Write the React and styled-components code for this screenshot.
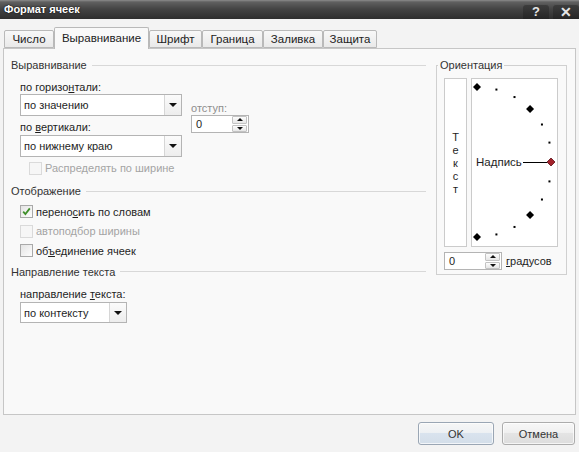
import React from 'react';
import styled, { createGlobalStyle } from 'styled-components';

const GlobalStyle = createGlobalStyle`
    html, body {
        margin: 0;
        padding: 0;
    }
    body {
        background: #f3f3f3;
        font-family: "Liberation Sans", Arial, sans-serif;
        font-size: 11px;
        color: #1e1e1e;
    }
`;

const Window = styled.div`
    width: 579px;
    height: 452px;
    display: flex;
    flex-direction: column;
    background: #f3f3f3;
    overflow: hidden;
`;

const TitleBar = styled.div`
    flex: none;
    height: 19px;
    display: flex;
    justify-content: space-between;
    align-items: stretch;
    background: linear-gradient(#8c8c8c 0, #606060 2px, #444 9px, #2e2e2e 19px);
`;

const Title = styled.div`
    color: #fff;
    font-weight: bold;
    font-size: 11px;
    line-height: 19px;
    padding-left: 4px;
    text-shadow: 0 0 2px #000;
`;

const TitleButtons = styled.div`
    display: flex;
    align-items: flex-end;
    gap: 4px;
`;

const TitleButton = styled.div`
    width: 26px;
    height: 15px;
    border-radius: 3px 3px 0 0;
    background: linear-gradient(#3e3e3e, #252525);
    box-shadow: inset 0 1px 0 rgba(255, 255, 255, 0.12);
    color: #e6e6e6;
    font-weight: bold;
    font-size: ${p => p.size || 13}px;
    display: flex;
    align-items: center;
    justify-content: center;
`;

const Body = styled.div`
    flex: 1;
    display: flex;
    flex-direction: column;
    padding: 8px 3px 0 3px;
`;

const TabRow = styled.div`
    display: flex;
    align-items: flex-end;
    height: 21px;
    padding-left: 1px;
    position: relative;
    z-index: 1;
`;

const Tab = styled.div`
    box-sizing: border-box;
    width: ${p => p.width}px;
    height: ${p => (p.active ? 22 : 18)}px;
    margin-bottom: ${p => (p.active ? -1 : 0)}px;
    border: 1px solid #b9b9b9;
    border-bottom: ${p => (p.active ? 'none' : '1px solid #b9b9b9')};
    border-radius: 2px 2px 0 0;
    background: ${p => (p.active ? '#f9f9f9' : 'linear-gradient(#f8f8f8, #e9e9e9)')};
    color: #222;
    font-size: 11.5px;
    text-align: center;
    line-height: ${p => (p.active ? 21 : 17)}px;
`;

const Panel = styled.div`
    flex: none;
    box-sizing: border-box;
    height: 367px;
    border: 1px solid #c6c6c6;
    background: #f9f9f9;
    display: flex;
    align-items: flex-start;
`;

const LeftColumn = styled.div`
    width: 422px;
    display: flex;
    flex-direction: column;
`;

const GroupTitle = styled.div`
    display: flex;
    align-items: center;
    height: 14px;
    line-height: 14px;
    margin-top: ${p => p.top}px;
    padding-left: 7px;
    color: #333;
    &::after {
        content: '';
        flex: 1;
        height: 1px;
        margin-left: 5px;
        background: #d8d8d8;
    }
`;

const AlignBlock = styled.div`
    display: flex;
    margin: 8px 0 0 16px;
`;

const FieldColumn = styled.div`
    display: flex;
    flex-direction: column;
    padding-top: ${p => p.top || 0}px;
    margin-left: ${p => p.left || 0}px;
`;

const Label = styled.div`
    height: 14px;
    line-height: 14px;
    margin-top: ${p => p.top || 0}px;
    margin-left: ${p => p.left || 0}px;
    color: ${p => (p.disabled ? '#8e8e8e' : '#1e1e1e')};
`;

const Key = styled.span`
    text-decoration: underline;
`;

const SelectBox = styled.div`
    box-sizing: border-box;
    width: ${p => p.width}px;
    height: ${p => p.height || 22}px;
    margin-top: ${p => p.top || 0}px;
    margin-left: ${p => p.left || 0}px;
    border: 1px solid #b4b4b4;
    background: #fff;
    display: flex;
    align-items: stretch;
`;

const SelectValue = styled.div`
    flex: 1;
    padding-left: 3px;
    display: flex;
    align-items: center;
    color: #1e1e1e;
`;

const SelectButton = styled.div`
    width: 16px;
    border-left: 1px solid #d6d6d6;
    background: linear-gradient(#fbfbfb, #ededed);
    display: flex;
    align-items: center;
    justify-content: center;
    &::before {
        content: '';
        border-left: 4px solid transparent;
        border-right: 4px solid transparent;
        border-top: 4px solid #111;
    }
`;

const Select = ({ width, height, top, left, value }) => (
    <SelectBox width={width} height={height} top={top} left={left}>
        <SelectValue>{value}</SelectValue>
        <SelectButton />
    </SelectBox>
);

const SpinBox = styled.div`
    box-sizing: border-box;
    width: 58px;
    height: 18px;
    border: 1px solid #b4b4b4;
    background: #fff;
    display: flex;
`;

const SpinValue = styled.div`
    flex: 1;
    padding-left: 4px;
    line-height: 16px;
    color: #1e1e1e;
`;

const SpinButtons = styled.div`
    width: 15px;
    display: flex;
    flex-direction: column;
    gap: 1px;
    padding: 0 1px 0 0;
`;

const SpinArrow = styled.div`
    flex: 1;
    border: 1px solid #c3c3c3;
    border-radius: 1px;
    background: linear-gradient(#fdfdfd, #e6e6e6);
    display: flex;
    align-items: center;
    justify-content: center;
    &::before {
        content: '';
        border-left: 3px solid transparent;
        border-right: 3px solid transparent;
        ${p => (p.up ? 'border-bottom: 3px solid #111;' : 'border-top: 3px solid #111;')}
    }
`;

const Spin = ({ value }) => (
    <SpinBox>
        <SpinValue>{value}</SpinValue>
        <SpinButtons>
            <SpinArrow up />
            <SpinArrow />
        </SpinButtons>
    </SpinBox>
);

const CheckRow = styled.div`
    display: flex;
    align-items: center;
    height: ${p => p.height || 19.5}px;
    margin-top: ${p => p.top || 0}px;
    margin-left: ${p => p.left || 16}px;
    color: ${p => (p.disabled ? '#a4a4a4' : '#1e1e1e')};
`;

const Box = styled.div`
    box-sizing: border-box;
    width: 13px;
    height: 13px;
    margin-right: 3px;
    border: 1px solid ${p => (p.disabled ? '#dadada' : '#a9a9a9')};
    background: ${p => (p.disabled ? '#f6f6f6' : 'linear-gradient(135deg, #e4e4e4, #fdfdfd)')};
    display: flex;
    align-items: center;
    justify-content: center;
`;

const Check = ({ checked, disabled, children, ...rest }) => (
    <CheckRow disabled={disabled} {...rest}>
        <Box disabled={disabled}>
            {checked && (
                <svg width="9" height="9" viewBox="0 0 9 9">
                    <path d="M1.2 4.6 L3.4 7 L7.8 1.4" fill="none" stroke="#3f8f2a" strokeWidth="1.8" />
                </svg>
            )}
        </Box>
        <span>{children}</span>
    </CheckRow>
);

const Orientation = styled.fieldset`
    box-sizing: border-box;
    width: 131px;
    min-width: 0;
    margin: 9px 0 0 10px;
    padding: 0;
    border: 1px solid #d0d0d0;
    legend {
        margin-left: 1px;
        padding: 0 2px;
        height: 14px;
        line-height: 14px;
        color: #333;
    }
`;

const OrientationInner = styled.div`
    padding: 6px 8px 4px 7px;
`;

const DialRow = styled.div`
    display: flex;
    gap: 4px;
    height: 169px;
`;

const VerticalText = styled.div`
    box-sizing: border-box;
    width: 23px;
    border: 1px solid #cbcbcb;
    background: #fff;
    display: flex;
    flex-direction: column;
    align-items: center;
    justify-content: center;
    padding-top: 2px;
    line-height: 13px;
    color: #1e1e1e;
`;

const Dial = styled.div`
    box-sizing: border-box;
    width: 87px;
    border: 1px solid #cbcbcb;
    background: #fff;
    svg {
        display: block;
    }
`;

const DegreeRow = styled.div`
    display: flex;
    align-items: center;
    gap: 4px;
    margin-top: 5px;
`;

const Footer = styled.div`
    display: flex;
    justify-content: flex-end;
    gap: 8px;
    padding: 7px 1px 0 0;
`;

const Button = styled.div`
    box-sizing: border-box;
    width: ${p => p.width}px;
    height: 23px;
    border: 1px solid ${p => (p.primary ? '#9aa6b4' : '#acacac')};
    border-radius: 3px;
    background: ${p =>
        p.primary
            ? 'linear-gradient(#f6f6f6 0, #eef1f4 45%, #d9e3ee 50%, #d3dee9 100%)'
            : 'linear-gradient(#f7f7f7 0, #f0f0f0 45%, #e4e4e4 50%, #dddddd 100%)'};
    box-shadow: inset 0 0 0 1px rgba(255, 255, 255, 0.7);
    color: #333;
    font-size: 11px;
    display: flex;
    align-items: center;
    justify-content: center;
`;

const angles = [90, 75, 60, 45, 30, 15, 0, -15, -30, -45, -60, -75, -90];

const DialDrawing = () => {
    const cx = 5;
    const cy = 83;
    const r = 75;
    return (
        <svg width="85" height="167" viewBox="0 0 85 167">
            {angles.map(a => {
                const rad = (a * Math.PI) / 180;
                const x = cx + r * Math.cos(rad);
                const y = cy - r * Math.sin(rad);
                if (a === 0) {
                    return (
                        <polygon
                            key={a}
                            points={`${x - 1},${y - 4} ${x + 3},${y} ${x - 1},${y + 4} ${x - 5},${y}`}
                            fill="#a3222a"
                            stroke="#5c1016"
                            strokeWidth="0.8"
                        />
                    );
                }
                if (a % 45 === 0) {
                    return (
                        <polygon
                            key={a}
                            points={`${x},${y - 4} ${x + 4},${y} ${x},${y + 4} ${x - 4},${y}`}
                            fill="#000"
                        />
                    );
                }
                return <rect key={a} x={x - 1} y={y - 1} width="2" height="2" fill="#000" />;
            })}
            <text
                x="4"
                y="83"
                dominantBaseline="central"
                fontFamily='"Liberation Sans", Arial, sans-serif'
                fontSize="11.5"
                fill="#1e1e1e"
            >
                Надпись
            </text>
            <line x1="51" y1="83.5" x2="75" y2="83.5" stroke="#000" strokeWidth="1" />
        </svg>
    );
};

const tabs = [
    { name: 'Число', width: 50 },
    { name: 'Выравнивание', width: 95, active: true },
    { name: 'Шрифт', width: 53 },
    { name: 'Граница', width: 61 },
    { name: 'Заливка', width: 60 },
    { name: 'Защита', width: 54 },
];

const App = () => (
    <Window>
        <GlobalStyle />
        <TitleBar>
            <Title>Формат ячеек</Title>
            <TitleButtons>
                <TitleButton>?</TitleButton>
                <TitleButton size={14}>✕</TitleButton>
            </TitleButtons>
        </TitleBar>
        <Body>
            <TabRow>
                {tabs.map(t => (
                    <Tab key={t.name} width={t.width} active={t.active}>
                        {t.name}
                    </Tab>
                ))}
            </TabRow>
            <Panel>
                <LeftColumn>
                    <GroupTitle top={9}>Выравнивание</GroupTitle>
                    <AlignBlock>
                        <FieldColumn>
                            <Label>
                                по горизо<Key>н</Key>тали:
                            </Label>
                            <Select width={162} value="по значению" />
                            <Label top={4}>
                                по <Key>в</Key>ертикали:
                            </Label>
                            <Select width={162} top={1} value="по нижнему краю" />
                        </FieldColumn>
                        <FieldColumn top={21} left={9}>
                            <Label disabled>отступ:</Label>
                            <Spin value="0" />
                        </FieldColumn>
                    </AlignBlock>
                    <Check disabled top={4} height={14} left={25}>
                        Распределять по ширине
                    </Check>

                    <GroupTitle top={9}>Отображение</GroupTitle>
                    <Check checked top={4}>
                        перено<Key>с</Key>ить по словам
                    </Check>
                    <Check disabled>автоподбор ширины</Check>
                    <Check>
                        об<Key>ъ</Key>единение ячеек
                    </Check>

                    <GroupTitle top={4}>Направление текста</GroupTitle>
                    <Label top={8} left={16}>
                        направление <Key>т</Key>екста:
                    </Label>
                    <Select width={107} height={21} top={1.5} left={16} value="по контексту" />
                </LeftColumn>

                <Orientation>
                    <legend>Ориентация</legend>
                    <OrientationInner>
                        <DialRow>
                            <VerticalText>
                                <span>Т</span>
                                <span>е</span>
                                <span>к</span>
                                <span>с</span>
                                <span>т</span>
                            </VerticalText>
                            <Dial>
                                <DialDrawing />
                            </Dial>
                        </DialRow>
                        <DegreeRow>
                            <Spin value="0" />
                            <span>
                                <Key>г</Key>радусов
                            </span>
                        </DegreeRow>
                    </OrientationInner>
                </Orientation>
            </Panel>
            <Footer>
                <Button primary width={76}>
                    OK
                </Button>
                <Button width={73}>Отмена</Button>
            </Footer>
        </Body>
    </Window>
);

export default App;
